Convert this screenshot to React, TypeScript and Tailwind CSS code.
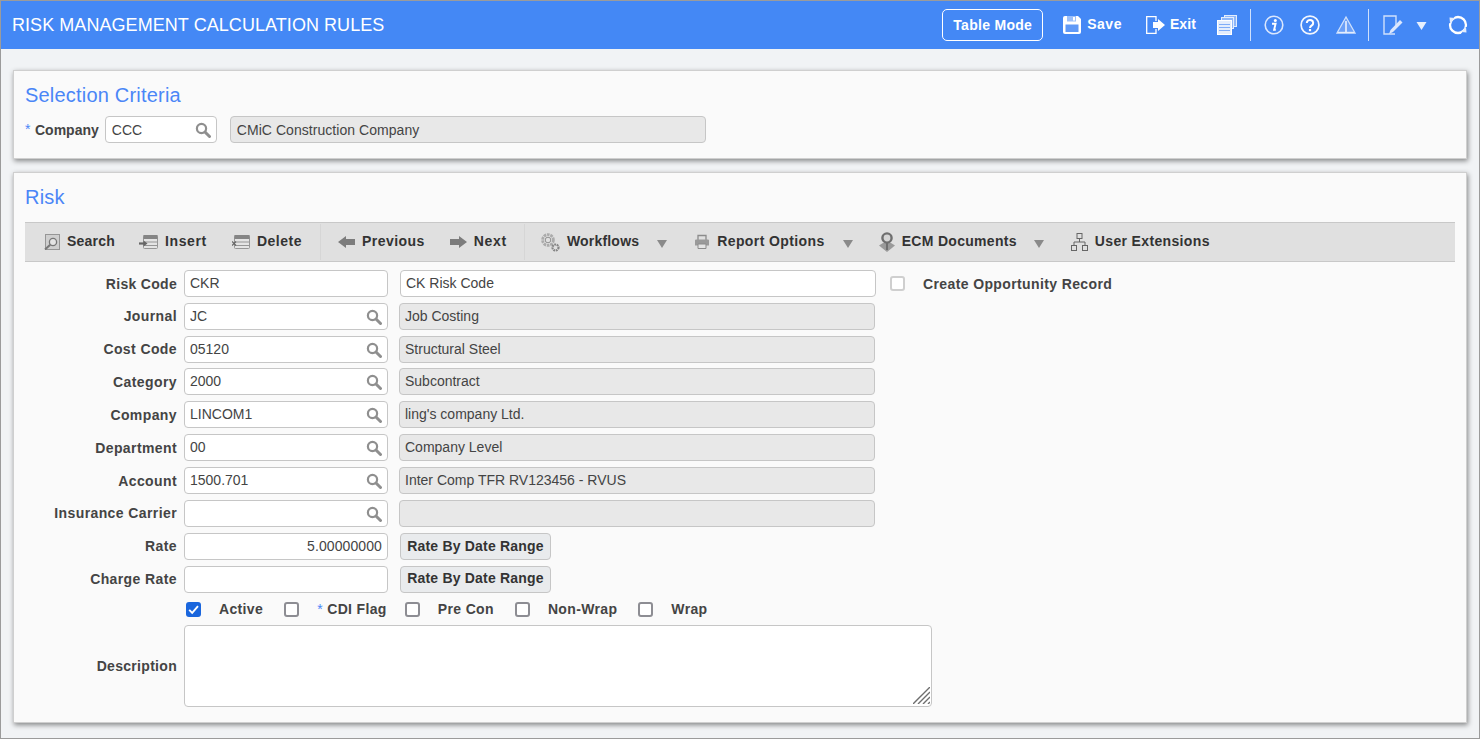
import { ReactNode } from "react";

const font = "font-['Liberation_Sans',Arial,sans-serif]";

function Lens({ className = "" }: { className?: string }) {
	return (
		<svg viewBox="0 0 16 16" className={`w-4 h-4 ${className}`} fill="none" stroke="#8f8f8f">
			<circle cx="6.5" cy="6.5" r="4.6" strokeWidth="2.2" />
			<path d="M10 10l4.5 4.5" strokeWidth="3" strokeLinecap="round" />
		</svg>
	);
}

function Caret({ color = "#8a8a8a", className = "" }: { color?: string; className?: string }) {
	return (
		<svg viewBox="0 0 10 8" className={`w-[10px] h-2 ${className}`}>
			<path d="M0 0h10L5 8z" fill={color} />
		</svg>
	);
}

function SaveIcon() {
	return (
		<svg viewBox="0 0 18 18" className="w-[18px] h-[18px]" fill="none">
			<path d="M0 2a2 2 0 0 1 2-2h13l3 3v13a2 2 0 0 1-2 2H2a2 2 0 0 1-2-2z" fill="#fff" />
			<rect x="4" y="0" width="9" height="5.5" fill="#9cc0fa" />
			<rect x="10" y="1" width="2" height="3.5" fill="#fff" />
			<rect x="2.5" y="8.5" width="13" height="7.5" fill="#5f99f7" />
		</svg>
	);
}

function ExitIcon() {
	return (
		<svg viewBox="0 0 19 18" className="w-[19px] h-[18px]" fill="none">
			<path d="M10 5V.7H.7v16.6H10V13" stroke="#fff" strokeWidth="1.3" />
			<path d="M7 6h5V3l7 6-7 6v-3H7z" fill="#fff" />
		</svg>
	);
}

function PagesIcon() {
	return (
		<svg viewBox="0 0 20 20" className="w-5 h-5" fill="none">
			<rect x="7.5" y="0.5" width="12" height="11" fill="#8fb7f9" stroke="#e3edfd" />
			<rect x="4.5" y="2.5" width="12" height="11" fill="#8fb7f9" stroke="#e3edfd" />
			<rect x="0.5" y="5.5" width="14" height="14" fill="#e3edfd" stroke="#fff" />
			<path d="M2 9.5h11M2 12.5h11M2 15.5h11" stroke="#7fadf8" strokeWidth="1.2" />
		</svg>
	);
}

function InfoIcon() {
	return (
		<svg viewBox="0 0 20 20" className="w-5 h-5" fill="none">
			<circle cx="10" cy="10" r="8.8" stroke="#dbe7fd" strokeWidth="1.6" />
			<circle cx="11.3" cy="5.4" r="1.5" fill="#fff" />
			<path d="M8 8.8h3.6l-1.5 6h1.7" stroke="#fff" strokeWidth="1.9" />
		</svg>
	);
}

function HelpIcon() {
	return (
		<svg viewBox="0 0 20 20" className="w-5 h-5" fill="none">
			<circle cx="10" cy="10" r="8.9" stroke="#f1f6fe" strokeWidth="1.7" />
			<path d="M6.8 8a3.2 3 0 1 1 5 2.4c-1.2.8-1.8 1.2-1.8 2.6" stroke="#fff" strokeWidth="2" />
			<rect x="8.9" y="14" width="2.2" height="2.2" fill="#fff" />
		</svg>
	);
}

function WarnIcon() {
	return (
		<svg viewBox="0 0 20 20" className="w-5 h-5" fill="none">
			<path d="M10 2L19 18H1z" fill="#6a9ff7" stroke="#cfe0fc" strokeWidth="1.3" />
			<path d="M10 6v12" stroke="#dbe7fd" strokeWidth="1.8" />
			<path d="M2 17.4h16" stroke="#e3edfd" strokeWidth="1.2" />
		</svg>
	);
}

function EditIcon() {
	return (
		<svg viewBox="0 0 20 20" className="w-5 h-5" fill="none">
			<path d="M12 19H1V1h12v9" stroke="#cfe0fc" strokeWidth="1.4" />
			<path d="M6 19l1.5-4L17 5l2.5 2.5L10 17z" fill="#dbe7fd" />
		</svg>
	);
}

function RefreshIcon() {
	return (
		<svg viewBox="0 0 20 20" className="w-5 h-5" fill="none">
			<circle cx="10" cy="10" r="8" stroke="#fff" strokeWidth="2.3" />
			<path d="M0 1h7L2 8h-2zM20 19h-7l5-7h2z" fill="#4488f5" />
			<path d="M1.5 2.5l5.5.5-5 5zM18.5 17.5l-5.5-.5 5-5z" fill="#e3edfd" />
		</svg>
	);
}

const g = "#969696";

const toolIcons: Record<string, ReactNode> = {
	search: (
		<svg viewBox="0 0 16 16" className="w-4 h-4" fill="none">
			<rect x="1.5" y="0.5" width="14" height="15" fill="#cfcfcf" stroke={g} />
			<circle cx="9" cy="8" r="3.6" stroke="#777" strokeWidth="1.3" fill="#e4e4e4" />
			<path d="M6.2 10.8L1 15.5" stroke="#777" strokeWidth="2" />
		</svg>
	),
	insert: (
		<svg viewBox="0 0 19 16" className="w-[19px] h-4" fill="none">
			<rect x="4.5" y="1.5" width="14" height="13" rx="1" fill="#e4e4e4" stroke={g} />
			<rect x="4.5" y="1" width="14" height="4" fill="#858585" />
			<path d="M5 8h13M5 11.5h13" stroke={g} />
			<path d="M0 9.5h5" stroke="#666" strokeWidth="2.2" />
			<path d="M4.5 6.5l4 3-4 3z" fill="#666" />
		</svg>
	),
	delete: (
		<svg viewBox="0 0 18 16" className="w-[18px] h-4" fill="none">
			<rect x="2.5" y="1.5" width="15" height="13" rx="1" fill="#e4e4e4" stroke={g} />
			<rect x="2.5" y="1" width="15" height="4" fill="#858585" />
			<path d="M3 8h14M3 11.5h14" stroke={g} />
			<path d="M0 7.5l4 4M4 7.5l-4 4" stroke="#666" strokeWidth="1.2" />
		</svg>
	),
	prev: (
		<svg viewBox="0 0 17 12" className="w-[17px] h-3">
			<path d="M0 6l8-6v3h9v6H8v3z" fill="#7c7c7c" />
		</svg>
	),
	next: (
		<svg viewBox="0 0 17 12" className="w-[17px] h-3">
			<path d="M17 6L9 0v3H0v6h9v3z" fill="#7c7c7c" />
		</svg>
	),
	workflows: (
		<svg viewBox="0 0 19 19" className="w-[19px] h-[19px]" fill="none">
			<circle cx="7" cy="7" r="5.4" stroke="#ababab" strokeWidth="2.8" strokeDasharray="2.6 .8" />
			<circle cx="7" cy="7" r="2.8" stroke="#909090" />
			<circle cx="14.5" cy="14.5" r="3" stroke="#858585" strokeWidth="2.2" strokeDasharray="1.8 .7" />
		</svg>
	),
	report: (
		<svg viewBox="0 0 16 16" className="w-4 h-4" fill="none">
			<path d="M4 6V1.5h8V6" stroke="#8c8c8c" strokeWidth="1.3" />
			<path d="M1 6.5a1 1 0 0 1 1-1h12a1 1 0 0 1 1 1v5H1z" fill="#9a9a9a" />
			<path d="M4 10h8v4.5H4z" fill="#e4e4e4" stroke="#8c8c8c" />
		</svg>
	),
	ecm: (
		<svg viewBox="0 0 16 20" className="w-4 h-5" fill="none">
			<path d="M0 13.5l8 6.5 8-6.5-4-2.5H4z" fill="#9a9a9a" />
			<circle cx="8" cy="6" r="4.6" stroke="#6f6f6f" strokeWidth="2.4" fill="#d6d6d6" />
			<path d="M8 10.5V18" stroke="#6f6f6f" strokeWidth="2" />
		</svg>
	),
	users: (
		<svg viewBox="0 0 17 18" className="w-[17px] h-[18px]" fill="none" stroke="#666">
			<rect x="6" y="0.5" width="5" height="5" />
			<rect x="0.5" y="12.5" width="5" height="5" />
			<rect x="11.5" y="12.5" width="5" height="5" />
			<path d="M8.5 5.5V9M3 12.5V9h11v3.5" />
		</svg>
	),
};

function ToolItem({ icon, label, className = "" }: { icon: string; label: string; className?: string }) {
	return (
		<div className={`flex items-center gap-[7px] ${className}`}>
			{toolIcons[icon]}
			<span className="mb-[2px] text-[14px] font-bold text-[#333]">{label}</span>
		</div>
	);
}

function Field({
	value = "",
	lov = false,
	right = false,
	lift = true,
	className = "",
	inputClass = "px-[5px]",
}: {
	value?: string;
	lov?: boolean;
	right?: boolean;
	lift?: boolean;
	className?: string;
	inputClass?: string;
}) {
	return (
		<div className={`relative h-[27px] ${className}`}>
			<input
				readOnly
				value={value}
				className={`w-full h-full bg-white border border-[#c6c6c6] rounded-[4px] text-[14px] text-[#444] outline-none ${inputClass} ${lift ? "pb-[2px]" : ""} ${font} ${right ? "text-right" : ""}`}
			/>
			{lov && <Lens className="absolute right-[6px] top-[6px]" />}
		</div>
	);
}

function ReadOnly({ value = "", className = "" }: { value?: string; className?: string }) {
	return (
		<div
			className={`h-[27px] bg-[#e8e8e8] border border-[#c6c6c6] rounded-[4px] px-[5px] flex items-center text-[14px] text-[#444] ${className}`}
		>
			{value}
		</div>
	);
}

function Label({ children, className = "tracking-[0.4px]" }: { children: ReactNode; className?: string }) {
	return <label className={`w-[152px] shrink-0 text-right text-[14px] font-bold text-[#444] ${className}`}>{children}</label>;
}

function RateButton({ className = "" }: { className?: string }) {
	return (
		<button className={`w-[151px] h-[27px] bg-[#e9ebed] border border-[#c6c6c6] rounded-[4px] text-[14px] font-bold text-[#333] tracking-[0.2px] ${className}`}>
			Rate By Date Range
		</button>
	);
}

function Check({ checked = false }: { checked?: boolean }) {
	return checked ? (
		<span className="block w-[15px] h-[15px] rounded-[3px] bg-[#1a66dd]">
			<svg viewBox="0 0 15 15" className="w-[15px] h-[15px]" fill="none">
				<path d="M3.2 7.8l3 3L12 4.2" stroke="#fff" strokeWidth="1.9" />
			</svg>
		</span>
	) : (
		<span className="block w-[15px] h-[15px] rounded-[3px] bg-white border-2 border-[#8d8d93]" />
	);
}

const lovRows = [
	["Journal", "JC", "Job Costing", "", ""],
	["Cost Code", "05120", "Structural Steel", "", ""],
	["Category", "2000", "Subcontract", "-mt-[1px]", "pt-[1px] tracking-[0.4px]"],
	["Company", "LINCOM1", "ling's company Ltd.", "", "pt-[1px] tracking-[0.4px]"],
	["Department", "00", "Company Level", "", "pt-[1px] tracking-[0.4px]"],
	["Account", "1500.701", "Inter Comp TFR RV123456 - RVUS", "", "pt-[1px] tracking-[0.4px]"],
	["Insurance Carrier", "", "", "", ""],
];

export default function App() {
	return (
		<div className={`w-[1480px] h-[739px] overflow-hidden flex flex-col bg-[#f1f3f5] border border-[#9b9b9b] ${font}`}>
			<header className="h-[48px] shrink-0 bg-[#4488f5] flex items-center text-white">
				<h1 className="ml-[11px] text-[18px] tracking-[0.06px]">RISK MANAGEMENT CALCULATION RULES</h1>
				<div className="ml-auto flex items-center">
					<button className="w-[101px] h-[32px] border border-white rounded-[5px] text-[14px] font-bold tracking-[0.3px]">Table Mode</button>
					<div className="ml-[20px] flex items-center gap-[6px]"><SaveIcon /><span className="mb-[2px] text-[14px] font-bold tracking-[0.5px]">Save</span></div>
					<div className="ml-[24px] flex items-center gap-[5px]"><ExitIcon /><span className="mb-[2px] text-[14px] font-bold tracking-[0.1px]">Exit</span></div>
					<div className="ml-[21px]"><PagesIcon /></div>
					<div className="ml-[13px] w-px h-[32px] bg-[#cfe0fc]" />
					<div className="ml-[13px]"><InfoIcon /></div>
					<div className="ml-[16px]"><HelpIcon /></div>
					<div className="ml-[16px]"><WarnIcon /></div>
					<div className="ml-[12px] w-px h-[32px] bg-[#cfe0fc]" />
					<div className="ml-[14px]"><EditIcon /></div>
					<div className="ml-[13px] mt-[2px]"><Caret color="#e8f0fe" className="w-[11px]" /></div>
					<div className="ml-[21px] mr-[11px]"><RefreshIcon /></div>
				</div>
			</header>

			<div className="flex-1 px-[12px] pt-[21px] flex flex-col gap-[13px]">
				<section className="h-[89px] bg-[#fafafa] border border-[#cfcfcf] shadow-[1px_2px_5px_rgba(0,0,0,0.45)] px-[11px] pt-[11px]">
					<h2 className="text-[20px] leading-[26px] tracking-[0.2px] text-[#4a86f7]">Selection Criteria</h2>
					<div className="mt-[8px] flex items-center">
						<span className="text-[14px] text-[#4a86f7] w-[10px]">*</span>
						<label className="pt-[1px] text-[14px] font-bold text-[#444]">Company</label>
						<Field value="CCC" lov lift={false} inputClass="pl-[6px] pr-[5px]" className="ml-[6px] w-[112px]" />
						<ReadOnly value="CMiC Construction Company" className="ml-[13px] w-[476px] pt-[1px] pl-[6px] tracking-[0.05px]" />
					</div>
				</section>

				<section className="h-[551px] bg-[#fafafa] border border-[#cfcfcf] shadow-[1px_2px_5px_rgba(0,0,0,0.45)] px-[11px] pt-[11px]">
					<h2 className="text-[20px] leading-[26px] tracking-[0.2px] text-[#4a86f7]">Risk</h2>
					<div className="mt-[12px] h-[40px] bg-[#e0e0e0] border-y border-[#c8c8c8] flex items-center">
						<ToolItem icon="search" label="Search" className="ml-[19px] tracking-[0.2px]" />
						<ToolItem icon="insert" label="Insert" className="ml-[24px] tracking-[0.65px]" />
						<ToolItem icon="delete" label="Delete" className="ml-[25px] tracking-[0.5px]" />
						<div className="ml-[18px] w-px h-[36px] bg-[#d6d6d6]" />
						<ToolItem icon="prev" label="Previous" className="ml-[17px] tracking-[0.45px]" />
						<ToolItem icon="next" label="Next" className="ml-[25px] tracking-[0.7px]" />
						<div className="ml-[17px] w-px h-[36px] bg-[#d6d6d6]" />
						<ToolItem icon="workflows" label="Workflows" className="ml-[16px] tracking-[0.2px]" />
						<Caret className="ml-[18px] mt-[3px]" />
						<ToolItem icon="report" label="Report Options" className="ml-[27px] tracking-[0.4px]" />
						<Caret className="ml-[18px] mt-[3px]" />
						<ToolItem icon="ecm" label="ECM Documents" className="ml-[26px] tracking-[0.3px]" />
						<Caret className="ml-[17px] mt-[3px]" />
						<ToolItem icon="users" label="User Extensions" className="ml-[27px] tracking-[0.35px]" />
					</div>

					<div className="mt-[8px] flex flex-col gap-[6px]">
						<div className="flex items-center">
							<Label className="tracking-[0.3px]"><span className="relative top-[1px]">Risk Code</span></Label>
							<Field value="CKR" className="ml-[7px] w-[204px]" />
							<Field value="CK Risk Code" className="ml-[12px] w-[476px]" />
							<span className="ml-[14px] w-[15px] h-[15px] rounded-[3px] border-2 border-[#cfcfcf] bg-white" />
							<span className="ml-[18px] pt-[1px] text-[14px] font-bold text-[#444] tracking-[0.38px]">Create Opportunity Record</span>
						</div>
						{lovRows.map(([label, code, desc, extra, labelClass]) => (
							<div key={label} className={`flex items-center ${extra}`}>
								<Label className={labelClass || "tracking-[0.4px]"}>{label}</Label>
								<Field value={code} lov className="ml-[7px] w-[204px]" />
								<ReadOnly value={desc} className="ml-[11px] w-[476px]" />
							</div>
						))}
						<div className="flex items-center">
							<Label>Rate</Label>
							<Field value="5.00000000" right inputClass="pl-[5px] pr-[5px] tracking-[0.1px]" className="ml-[7px] w-[204px]" />
							<div className="ml-[12px]"><RateButton /></div>
						</div>
						<div className="flex items-center">
							<Label>Charge Rate</Label>
							<Field className="ml-[7px] w-[204px]" />
							<div className="ml-[12px]"><RateButton className="pb-[2px]" /></div>
						</div>
					</div>

					<div className="mt-[7px] ml-[161px] flex items-center h-[18px] text-[14px] font-bold text-[#444] tracking-[0.35px]">
						<Check checked />
						<span className="ml-[18px]">Active</span>
						<span className="ml-[21px]"><Check /></span>
						<span className="ml-[18px]"><span className="text-[#4a86f7] font-normal">*</span> CDI Flag</span>
						<span className="ml-[18px]"><Check /></span>
						<span className="ml-[18px]">Pre Con</span>
						<span className="ml-[21px]"><Check /></span>
						<span className="ml-[18px]">Non-Wrap</span>
						<span className="ml-[21px]"><Check /></span>
						<span className="ml-[18px]">Wrap</span>
					</div>

					<div className="mt-[7px] flex items-center">
						<Label className="tracking-[0.3px]">Description</Label>
						<div className="relative ml-[7px] w-[748px] h-[82px] bg-white border border-[#c6c6c6] rounded-[4px]">
							<svg viewBox="0 0 17 17" className="absolute right-[1px] bottom-[2px] w-[17px] h-[17px]" fill="none" stroke="#6e6e6e" strokeWidth="1.4">
								<path d="M0 17L17 0M5 17L17 5M10 17l7-7M15 17l2-2" />
							</svg>
						</div>
					</div>
				</section>
			</div>
		</div>
	);
}
